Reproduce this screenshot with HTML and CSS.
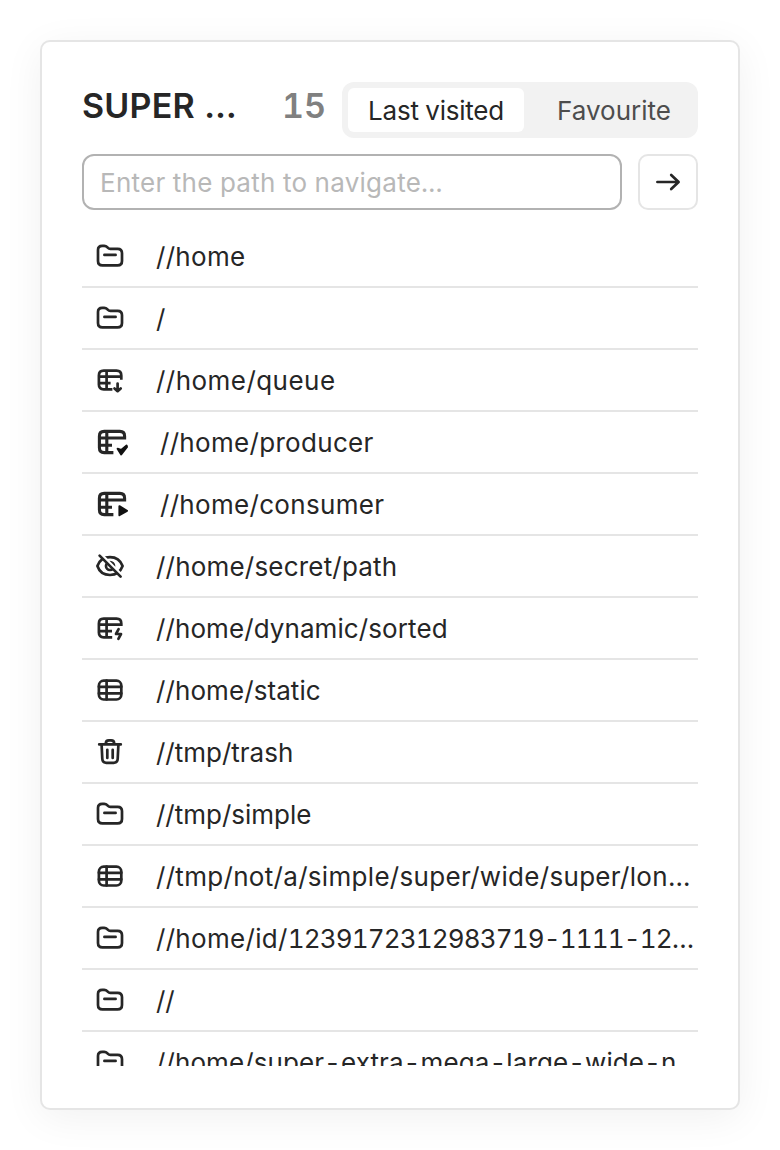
FILE: index.html
```html
<!DOCTYPE html>
<html lang="en">
<head>
<meta charset="utf-8">
<title>Navigation</title>
<link rel="stylesheet" href="styles.css">
</head>
<body>
<svg class="sprite" aria-hidden="true">
  <symbol id="folder" viewBox="0 0 32 32"><path d="M4 21V10Q4 5.8 8.2 5.8H10.2Q12 5.8 13.3 7.2L14 7.9Q14.9 8.9 16.3 8.9H23.6Q28 8.9 28 13.3V21Q28 25.4 23.6 25.4H8.4Q4 25.4 4 21ZM10.4 14.9H21.6"/></symbol>
  <symbol id="table" viewBox="0 0 32 32"><rect x="4.9" y="6.7" width="22.4" height="18.8" rx="4.8"/><path d="M12.6 6.7V25.5M4.9 12.8H27.3M4.9 19.3H27.3"/></symbol>
  <symbol id="queue" viewBox="0 0 32 32"><path class="butt" d="M27.3 15.8V11.4Q27.3 6.6 22.5 6.6H9.7Q4.9 6.6 4.9 11.4V20.5Q4.9 25.3 9.7 25.3H18.4M12.6 6.6V25.3M4.9 12.7H27.3M4.9 19.1H16.6"/><path d="M23.6 19.6V27M20.5 24.4L23.6 27.2L26.7 24.4"/></symbol>
  <symbol id="dynamic" viewBox="0 0 32 32"><path class="butt" d="M27.3 14V11.4Q27.3 6.6 22.5 6.6H9.7Q4.9 6.6 4.9 11.4V20.5Q4.9 25.3 9.7 25.3H18.2M12.6 6.6V25.3M4.9 12.7H27.3M4.9 19.1H18"/><path d="M24.6 17.2L22 22H27L24.4 26.8"/></symbol>
  <symbol id="producer" viewBox="0 0 36 32"><path class="heavy" d="M30.6 13.4V10.2Q30.6 5.4 25.8 5.4H10.2Q5.4 5.4 5.4 10.2V21.8Q5.4 26.6 10.2 26.6H19.4M12.8 5.4V26.6M5.4 12H30.6M5.4 19.2H18"/><path class="solid" d="M23.6 22.8L27.2 24L32.6 19.6L33 21L27.2 28.4Z"/></symbol>
  <symbol id="consumer" viewBox="0 0 36 32"><path class="heavy" d="M30.6 13.4V10.2Q30.6 5.4 25.8 5.4H10.2Q5.4 5.4 5.4 10.2V21.8Q5.4 26.6 10.2 26.6H19.4M12.8 5.4V26.6M5.4 12H30.6M5.4 19.2H18"/><path class="solid" d="M25.4 18.2L33 22.8L25.4 27.2Z"/></symbol>
  <symbol id="hidden" viewBox="0 0 32 32"><path d="M3.4 16C5.2 10.7 9.8 7.1 16 7.1S26.6 10.7 28.6 16C26.6 21.3 22.2 25 16 25S5.2 21.3 3.4 16Z"/><circle cx="16" cy="16" r="4"/><path class="gap" d="M7.6 4.8L27.4 24.6"/><path d="M5.6 5.6L26.6 26.6"/></symbol>
  <symbol id="trash" viewBox="0 0 32 32"><path d="M5.2 8.4H26.8M11.8 8.2V7.4Q11.8 4.3 14.9 4.3H17.1Q20.2 4.3 20.2 7.4V8.2M7.6 8.6L8.3 22.8Q8.5 26.8 12.3 26.8H19.7Q23.5 26.8 23.7 22.8L24.4 8.6M13.3 13.8V22M18.7 13.8V22"/></symbol>
</svg>
<main class="card">
  <header class="header">
    <h1 class="title">SUPER …</h1>
    <span class="count">15</span>
    <div class="tabs">
      <button class="tab tab-active">Last visited</button>
      <button class="tab">Favourite</button>
    </div>
  </header>
  <form class="path-form">
    <input class="path-input" type="text" placeholder="Enter the path to navigate...">
    <button class="go" type="button" aria-label="Go"><svg class="icon" viewBox="0 0 32 32"><path d="M5.4 16H26.4M19.2 9L26.6 16L19.2 23"/></svg></button>
  </form>
  <ul class="list">
    <li class="row"><svg class="icon"><use href="#folder"/></svg><span class="path loose">//home</span></li>
    <li class="row"><svg class="icon"><use href="#folder"/></svg><span class="path">/</span></li>
    <li class="row"><svg class="icon"><use href="#queue"/></svg><span class="path looser">//home/queue</span></li>
    <li class="row"><svg class="icon icon-wide"><use href="#producer"/></svg><span class="path loose">//home/producer</span></li>
    <li class="row"><svg class="icon icon-wide"><use href="#consumer"/></svg><span class="path loose">//home/consumer</span></li>
    <li class="row"><svg class="icon"><use href="#hidden"/></svg><span class="path relaxed">//home/secret/path</span></li>
    <li class="row"><svg class="icon"><use href="#dynamic"/></svg><span class="path slight">//home/dynamic/sorted</span></li>
    <li class="row"><svg class="icon"><use href="#table"/></svg><span class="path slight">//home/static</span></li>
    <li class="row"><svg class="icon"><use href="#trash"/></svg><span class="path">//tmp/trash</span></li>
    <li class="row"><svg class="icon"><use href="#folder"/></svg><span class="path">//tmp/simple</span></li>
    <li class="row"><svg class="icon"><use href="#table"/></svg><span class="path loose">//tmp/not/a/simple/super/wide/super/lon…</span></li>
    <li class="row"><svg class="icon"><use href="#folder"/></svg><span class="path loose">//home/id/<span class="digits">1239172312983719-1111-12…</span></span></li>
    <li class="row"><svg class="icon"><use href="#folder"/></svg><span class="path">//</span></li>
    <li class="row"><svg class="icon"><use href="#folder"/></svg><span class="path slight">//home/super-extra-mega-large-wide-n…</span></li>
  </ul>
</main>
</body>
</html>
```
FILE: styles.css
```css
* { box-sizing: border-box; }
body {
  margin: 0;
  padding: 40px;
  background: #fff;
  color: #262626;
  font: 400 26px/36px Inter, sans-serif;
  font-feature-settings: "tnum";
}
.sprite { display: none; }
.card {
  width: 700px;
  height: 1070px;
  padding: 40px;
  border: 2px solid #e5e5e5;
  border-radius: 10px;
  background: #fff;
  box-shadow: 0 8px 40px rgba(0, 0, 0, 0.06);
}
.header { display: flex; height: 56px; }
.title, .count {
  margin: 0;
  font-size: 34px;
  font-weight: 600;
  line-height: 48px;
  white-space: nowrap;
}
.title { width: 200px; letter-spacing: 0.2px; }
.count { width: 60px; color: #808080; }
.tabs {
  display: flex;
  width: 356px;
  padding: 6px;
  border-radius: 12px;
  background: #f2f2f2;
}
.tab {
  padding: 2px 0 0;
  flex: 0 0 176px;
  border: 0;
  border-radius: 6px;
  background: none;
  color: #4d4d4d;
  font: inherit;
  font-feature-settings: "tnum";
  white-space: nowrap;
}
.tab:last-child { flex-basis: 180px; }
.tab-active { background: #fff; color: #262626; letter-spacing: -0.25px; }
.path-form { display: flex; gap: 16px; margin: 16px 0 0; height: 56px; }
.path-input {
  width: 540px;
  padding: 2px 16px 0;
  border: 2px solid #b2b2b2;
  border-radius: 12px;
  background: #fff;
  font: inherit;
  letter-spacing: 0.27px;
}
.path-input::placeholder { color: #b8b8b8; opacity: 1; }
.go {
  display: grid;
  place-items: center;
  width: 60px;
  padding: 0;
  border: 2px solid #e5e5e5;
  border-radius: 10px;
  background: #fff;
}
.list {
  height: 840px;
  margin: 16px 0 0;
  padding: 0;
  overflow: hidden;
  list-style: none;
}
.row {
  display: flex;
  align-items: center;
  gap: 30px;
  height: 62px;
  padding-left: 12px;
  border-bottom: 2px solid #e5e5e5;
}
.path { padding-top: 2px; white-space: nowrap; }
.slight { letter-spacing: 0.09px; }
.relaxed { letter-spacing: 0.2px; }
.loose { letter-spacing: 0.31px; }
.looser { letter-spacing: 0.46px; }
.digits { letter-spacing: -0.86px; }
.icon {
  flex: none;
  width: 32px;
  height: 32px;
  fill: none;
  stroke: #262626;
  stroke-width: 2.7;
  stroke-linecap: round;
  stroke-linejoin: round;
}
.icon-wide { width: 36px; }
.butt { stroke-linecap: butt; }
.heavy { stroke-width: 3.1; stroke-linecap: butt; }
.solid { fill: #111; stroke: #111; stroke-width: 2; }
.gap { stroke: #fff; }
```
